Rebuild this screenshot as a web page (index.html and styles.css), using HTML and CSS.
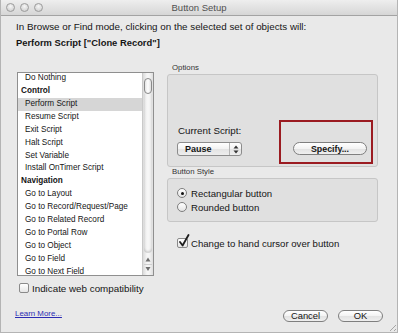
FILE: index.html
```html
<!DOCTYPE html>
<html lang="en">
<head>
    <meta charset="UTF-8">
    <meta name="viewport" content="width=device-width, initial-scale=1.0">
    <title>Button Setup</title>
    <link rel="stylesheet" href="styles.css">
</head>
<body>
    <div class="window">
        <div class="titlebar">
            <div class="lights">
                <span class="light"></span>
                <span class="light"></span>
                <span class="light"></span>
            </div>
            <div class="title">Button Setup</div>
            <div class="lights-spacer"></div>
        </div>

        <div class="content">
            <p class="intro">In Browse or Find mode, clicking on the selected set of objects will:</p>
            <p class="action">Perform Script ["Clone Record"]</p>

            <div class="main">
                <div class="left-col">
                    <div class="step-list">
                        <ul class="steps">
                            <li>Do Nothing</li>
                            <li class="group">Control</li>
                            <li class="selected">Perform Script</li>
                            <li>Resume Script</li>
                            <li>Exit Script</li>
                            <li>Halt Script</li>
                            <li>Set Variable</li>
                            <li>Install OnTimer Script</li>
                            <li class="group">Navigation</li>
                            <li>Go to Layout</li>
                            <li>Go to Record/Request/Page</li>
                            <li>Go to Related Record</li>
                            <li>Go to Portal Row</li>
                            <li>Go to Object</li>
                            <li>Go to Field</li>
                            <li>Go to Next Field</li>
                        </ul>
                        <div class="scrollbar">
                            <div class="thumb"></div>
                            <div class="track"></div>
                            <svg class="arrows" width="10" height="22" viewBox="0 0 10 22">
                                <polygon points="5,4.5 7.5,8.5 2.5,8.5" fill="#6e6e6e"/>
                                <line x1="1" y1="11.5" x2="9" y2="11.5" stroke="#cfcfcf" stroke-width="1"/>
                                <polygon points="5,18 7.5,14 2.5,14" fill="#6e6e6e"/>
                            </svg>
                        </div>
                    </div>
                    <div class="check-row web">
                        <span class="checkbox"></span>
                        <span>Indicate web compatibility</span>
                    </div>
                </div>

                <div class="right-col">
                    <div class="group-label">Options</div>
                    <div class="group-box options">
                        <div class="current-script">
                            <div class="field-label">Current Script:</div>
                            <div class="popup">
                                <span class="popup-text">Pause</span>
                                <span class="popup-arrows">
                                    <svg width="6" height="9" viewBox="0 0 6 9">
                                        <polygon points="3,0.5 5.5,3.5 0.5,3.5" fill="#333"/>
                                        <polygon points="3,8.5 5.5,5.5 0.5,5.5" fill="#333"/>
                                    </svg>
                                </span>
                            </div>
                        </div>
                        <div class="highlight">
                            <button class="pill specify">Specify...</button>
                        </div>
                    </div>

                    <div class="group-label">Button Style</div>
                    <div class="group-box style-box">
                        <div class="radio-row"><span class="radio checked"></span><span>Rectangular button</span></div>
                        <div class="radio-row"><span class="radio"></span><span>Rounded button</span></div>
                    </div>

                    <div class="check-row hand">
                        <span class="checkbox">
                            <svg class="checkmark" width="12" height="14" viewBox="0 0 12 14">
                                <path d="M2 8 L4.6 11.5 L10.5 1" fill="none" stroke="#1e1e1e" stroke-width="1.8" stroke-linecap="round" stroke-linejoin="round"/>
                            </svg>
                        </span>
                        <span>Change to hand cursor over button</span>
                    </div>
                </div>
            </div>

            <div class="footer">
                <a class="learn-more" href="#">Learn More...</a>
                <div class="buttons">
                    <button class="pill">Cancel</button>
                    <button class="pill">OK</button>
                </div>
            </div>
        </div>

        <div class="grip"></div>
    </div>
</body>
</html>
```

FILE: styles.css
```css
body {
    margin: 0;
    background-color: #ffffff;
    font-family: "Liberation Sans", Arial, sans-serif;
    color: #151515;
}
.window {
    position: relative;
    width: 398px;
    height: 333px;
    box-sizing: border-box;
    border: 1px solid #b4b4b4;
    border-top: none;
    background-color: #e9e9e9;
    overflow: hidden;
}
.titlebar {
    display: flex;
    align-items: center;
    height: 15px;
    border-bottom: 1px solid #a3a3a3;
    background: linear-gradient(#eeeeee, #d6d6d6);
}
.lights {
    display: flex;
    gap: 5px;
    width: 44px;
    padding-left: 5px;
    box-sizing: border-box;
}
.lights-spacer {
    width: 44px;
}
.light {
    width: 9px;
    height: 9px;
    box-sizing: border-box;
    border-radius: 50%;
    border: 1px solid #9c9c9c;
    background: radial-gradient(circle at 50% 35%, #f6f6f6, #c9c9c9);
}
.title {
    flex: 1;
    text-align: center;
    font-size: 9.5px;
    color: #505050;
}
.content {
    padding: 0 14px 0 15px;
}
.intro {
    margin: 0;
    padding-top: 5px;
    font-size: 9.8px;
    line-height: 12px;
}
.action {
    margin: 4px 0 0;
    font-size: 9.4px;
    line-height: 12px;
    font-weight: bold;
}
.main {
    display: flex;
    gap: 13px;
    margin-top: 14px;
    height: 231px;
}
.left-col {
    width: 137px;
    margin-left: 1px;
    padding-top: 9px;
}
.step-list {
    display: flex;
    height: 204px;
    box-sizing: border-box;
    border: 1px solid #8f8f8f;
    background-color: #ffffff;
    overflow: hidden;
}
.steps {
    flex: 1;
    list-style: none;
    margin: -1px 0 0;
    padding: 0;
    font-size: 8.2px;
}
.steps li {
    height: 12.93px;
    line-height: 12.93px;
    padding-left: 7px;
    white-space: nowrap;
}
.steps li.group {
    padding-left: 3px;
    font-weight: bold;
}
.steps li.selected {
    background-color: #d6d6d6;
}
.scrollbar {
    display: flex;
    flex-direction: column;
    width: 10px;
    border-left: 1px solid #c9c9c9;
    background: linear-gradient(to right, #dadada, #f6f6f6 40%, #f6f6f6 60%, #dedede);
}
.thumb {
    height: 16px;
    margin: 5px 0 0 1px;
    width: 8px;
    box-sizing: border-box;
    border: 1px solid #8a8a8a;
    border-radius: 5px;
    background: linear-gradient(to right, #e4e4e4, #ffffff 50%, #e0e0e0);
}
.track {
    flex: 1;
    margin: 0 1px;
    border-radius: 0 0 5px 5px;
    box-shadow: inset 0 -2px 2px rgba(0, 0, 0, 0.14);
}
.arrows {
    display: block;
}
.check-row {
    display: flex;
    align-items: center;
    height: 12px;
    font-size: 9.8px;
}
.check-row.web {
    margin-top: 6px;
    padding-left: 2px;
    gap: 3px;
}
.checkbox {
    position: relative;
    width: 10px;
    height: 10px;
    box-sizing: border-box;
    border: 1px solid #8a8a8a;
    border-radius: 2px;
    background: linear-gradient(#ffffff, #e6e6e6);
    flex-shrink: 0;
}
.checkmark {
    position: absolute;
    left: 0;
    top: -5px;
}
.right-col {
    width: 211px;
}
.group-label {
    height: 10px;
    line-height: 10px;
    padding-left: 5px;
    font-size: 7.8px;
    color: #333333;
}
.group-box {
    margin-top: 1px;
    box-sizing: border-box;
    border: 1px solid #c6c6c6;
    border-radius: 3px;
    background-color: #e0e0e0;
}
.options {
    display: flex;
    justify-content: space-between;
    align-items: flex-end;
    height: 93px;
    padding: 0 4px 2px 9px;
}
.current-script {
    margin-bottom: 8px;
}
.field-label {
    font-size: 9.8px;
    line-height: 12px;
    padding-left: 1px;
    margin-bottom: 5px;
}
.popup {
    display: flex;
    align-items: center;
    width: 65px;
    height: 14px;
    box-sizing: border-box;
    border: 1px solid #8c8c8c;
    border-radius: 3px;
    background: linear-gradient(#ffffff, #f2f2f2 50%, #e3e3e3 51%, #eeeeee);
    font-size: 9px;
    font-weight: bold;
}
.popup-text {
    flex: 1;
    padding-left: 7px;
}
.popup-arrows {
    display: flex;
    align-items: center;
    justify-content: center;
    width: 11px;
    height: 100%;
    border-left: 1px solid #b5b5b5;
}
.popup-arrows svg {
    display: block;
}
.highlight {
    display: flex;
    align-items: flex-end;
    justify-content: flex-end;
    width: 94px;
    height: 44px;
    box-sizing: border-box;
    border: 2px solid #9b1b21;
    padding: 0 4px 7px 0;
}
.pill {
    height: 12px;
    width: 45px;
    box-sizing: border-box;
    padding: 0;
    border: 1px solid #7f7f7f;
    border-radius: 7px;
    background: linear-gradient(#ffffff, #f3f3f3 50%, #e2e2e2 51%, #efefef);
    font-family: "Liberation Sans", Arial, sans-serif;
    font-size: 9.4px;
    line-height: 10px;
    color: #151515;
}
.pill.specify {
    width: 74px;
    height: 13px;
    font-weight: bold;
    font-size: 8.8px;
}
.style-box {
    height: 44px;
    padding: 8px 0 0 9px;
}
.radio-row {
    display: flex;
    align-items: center;
    gap: 4px;
    height: 12px;
    margin-bottom: 2px;
    font-size: 9.6px;
}
.radio {
    position: relative;
    width: 10px;
    height: 10px;
    box-sizing: border-box;
    border: 1px solid #7e7e7e;
    border-radius: 50%;
    background: linear-gradient(#ffffff, #e4e4e4);
}
.radio.checked::after {
    content: "";
    position: absolute;
    left: 2.5px;
    top: 2.5px;
    width: 3px;
    height: 3px;
    border-radius: 50%;
    background-color: #111111;
}
.check-row.hand {
    margin-top: 15px;
    padding-left: 10px;
    gap: 3px;
    font-size: 9.6px;
}
.check-row.hand .checkbox {
    width: 11px;
}
.footer {
    display: flex;
    justify-content: space-between;
    align-items: center;
    height: 16px;
    margin-top: 14px;
}
.learn-more {
    margin: 0 0 4px -1px;
    font-size: 7.9px;
    line-height: 10px;
    color: #2b2bb3;
}
.buttons {
    display: flex;
    gap: 10px;
}
.grip {
    position: absolute;
    right: 1px;
    bottom: 1px;
    width: 9px;
    height: 9px;
    background: repeating-linear-gradient(135deg, transparent 0, transparent 2px, #a5a5a5 2px, #a5a5a5 3px);
    clip-path: polygon(100% 0, 100% 100%, 0 100%);
}
```
